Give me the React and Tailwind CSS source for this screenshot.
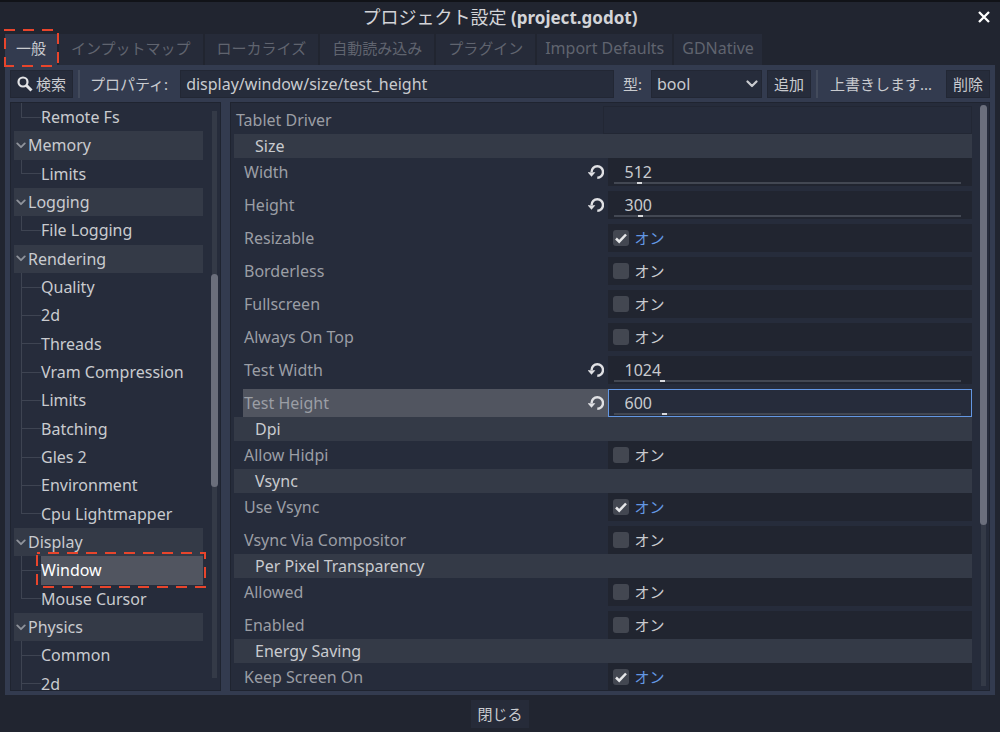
import React from "react";

const TABS = [
  { label: "一般" },
  { label: "インプットマップ" },
  { label: "ローカライズ" },
  { label: "自動読み込み" },
  { label: "プラグイン" },
  { label: "Import Defaults", latin: true },
  { label: "GDNative", latin: true },
];

const TREE = [
  { label: "Remote Fs", last: true },
  { label: "Memory", header: true },
  { label: "Limits", last: true },
  { label: "Logging", header: true },
  { label: "File Logging", last: true },
  { label: "Rendering", header: true },
  { label: "Quality" },
  { label: "2d" },
  { label: "Threads" },
  { label: "Vram Compression" },
  { label: "Limits" },
  { label: "Batching" },
  { label: "Gles 2" },
  { label: "Environment" },
  { label: "Cpu Lightmapper", last: true },
  { label: "Display", header: true },
  { label: "Window", selected: true },
  { label: "Mouse Cursor", last: true },
  { label: "Physics", header: true },
  { label: "Common" },
  { label: "2d" },
];

const GROUPS = [
  {
    title: "Size",
    rows: [
      { label: "Width", value: "512", pos: 6.8 },
      { label: "Height", value: "300", pos: 7.2 },
      { label: "Resizable", on: true },
      { label: "Borderless", on: false },
      { label: "Fullscreen", on: false },
      { label: "Always On Top", on: false },
      { label: "Test Width", value: "1024", pos: 13.6 },
      { label: "Test Height", value: "600", pos: 14.1, focused: true },
    ],
  },
  { title: "Dpi", rows: [{ label: "Allow Hidpi", on: false }] },
  { title: "Vsync", rows: [{ label: "Use Vsync", on: true }, { label: "Vsync Via Compositor", on: false }] },
  { title: "Per Pixel Transparency", rows: [{ label: "Allowed", on: false }, { label: "Enabled", on: false }] },
  { title: "Energy Saving", rows: [{ label: "Keep Screen On", on: true }] },
];

function Chevron({ className }) {
  return (
    <svg viewBox="0 0 12 8" fill="none" stroke="currentColor" strokeWidth="2.2" strokeLinecap="round" strokeLinejoin="round" className={className} aria-hidden="true">
      <path d="M1.5 1.5 6 6l4.500-4.500" />
    </svg>
  );
}

function TreeItem({ item }) {
  if (item.header) {
    return (
      <li className="min-h-0">
        <button className="flex h-full w-full items-center gap-[2px] bg-[#343a47] pl-[2px] text-left">
          <Chevron className="h-[7px] w-[10px] text-[#8f939b]" />
          <span>{item.label}</span>
        </button>
      </li>
    );
  }
  return (
    <li className="flex min-h-0 pl-[7px]">
      <div className="flex w-5 shrink-0 flex-col">
        <div className="flex-1 border-b border-l border-[#3e4452]" />
        <div className={item.last ? "flex-1" : "flex-1 border-l border-[#3e4452]"} />
      </div>
      <button className={item.selected ? "relative flex flex-1 items-center bg-[#515560] text-left text-white" : "flex flex-1 items-center text-left"}>
        {item.label}
        {item.selected && (
          <svg viewBox="0 0 170 36" fill="none" stroke="#e8452c" strokeWidth="2" className="absolute -left-[5px] -top-1 z-10 h-9 w-[170px]" aria-hidden="true">
            <path d="M1 1h168v34H1z" strokeDasharray="11 8" strokeDashoffset="8" />
          </svg>
        )}
      </button>
    </li>
  );
}

function Revert({ label }) {
  return (
    <button aria-label={`Revert ${label}`} className="mr-1 size-4 text-[#e0e1e4]">
      <svg viewBox="0 0 16 16" fill="none" stroke="currentColor" className="size-4">
        <path d="M3.600 8a5.700 5.700 0 1 1 5.700 5.700" strokeWidth="2.400" />
        <path d="M-.6 8.200h8L3.500 12.800z" fill="currentColor" stroke="none" />
      </svg>
    </button>
  );
}

function NumberField({ row }) {
  return (
    <div className={row.focused ? "flex h-7 flex-col border border-[#6397e3] bg-[#262c3b] pl-[5px] pr-[10px]" : "flex h-7 flex-col border border-transparent bg-[#212530] pl-[5px] pr-[10px]"}>
      <input type="text" aria-label={row.label} defaultValue={row.value} className="h-[23px] w-full bg-transparent pl-[11px] pt-[3px] leading-5 outline-none" />
      <input
        type="range"
        aria-label={`${row.label} slider`}
        min="0"
        max="100"
        step="any"
        defaultValue={row.pos}
        className="block h-[2px] w-full appearance-none bg-[#434853] outline-none [&::-webkit-slider-thumb]:h-[2px] [&::-webkit-slider-thumb]:w-[5px] [&::-webkit-slider-thumb]:appearance-none [&::-webkit-slider-thumb]:bg-[#d8d9dc]"
      />
    </div>
  );
}

function CheckField({ row }) {
  return (
    <label className="flex h-7 items-center gap-[6px] bg-[#212530] pl-[5px]">
      <span className="grid size-4">
        <input type="checkbox" aria-label={row.label} defaultChecked={row.on} className="peer size-4 appearance-none rounded-[3px] bg-[#434751] [grid-area:1/1]" />
        <svg viewBox="0 0 16 16" fill="none" stroke="#e6e7e9" strokeWidth="2.500" className="pointer-events-none invisible size-4 [grid-area:1/1] peer-checked:visible" aria-hidden="true">
          <path d="m3 8.500 3.200 3.200L13 4.500" />
        </svg>
      </span>
      <span className={row.on ? "text-[15px] text-[#6397e3]" : "text-[15px]"}>オン</span>
    </label>
  );
}

function PropertyRow({ row }) {
  return (
    <div className="grid grid-cols-2 pl-[9px]">
      <div className={row.focused ? "flex items-center bg-[#515560] pl-px" : "flex items-center pl-px"}>
        <span className="flex-1 text-[#9b9ea5]">{row.label}</span>
        {row.value && <Revert label={row.label} />}
      </div>
      {row.value ? <NumberField row={row} /> : <CheckField row={row} />}
    </div>
  );
}

const barButton = "flex h-7 items-center justify-center bg-[#262c3b] border border-[#222734]";

export default function App() {
  return (
    <div className="flex h-screen flex-col overflow-hidden border-t-2 border-[#111318] bg-[#212530] text-[16px] leading-5 text-[#c9cbcf] [font-family:'Noto_Sans','Noto_Sans_CJK_JP',sans-serif]">
      <header className="grid h-8 shrink-0 grid-cols-[32px_1fr_32px] items-center pb-[2px]">
        <h1 className="col-start-2 text-center text-[17px] font-bold text-[#d3d4d8]">
          <span className="text-[18px] font-normal">プロジェクト設定</span> (project.godot)
        </h1>
        <button aria-label="Close" className="flex justify-center text-white">
          <svg viewBox="0 0 12 12" fill="none" stroke="currentColor" strokeWidth="2.300" className="size-3">
            <path d="m1 1 10 10M11 1 1 11" />
          </svg>
        </button>
      </header>

      <nav className="flex h-[31px] shrink-0 gap-[2px] pl-[5px]">
        {TABS.map((tab, i) => (
          <button
            key={tab.label}
            className={
              i === 0
                ? "relative bg-[#333b4f] px-[11px] pb-1 text-[15px]"
                : tab.latin
                  ? "bg-[#262b39] px-2 pb-1 text-[#60646f]"
                  : "bg-[#262b39] px-3 pb-1 text-[15px] text-[#60646f]"
            }
          >
            {tab.label}
            {i === 0 && (
              <svg viewBox="0 0 56 40" fill="none" stroke="#e8452c" strokeWidth="2" className="absolute -left-px -top-[6px] h-10 w-14" aria-hidden="true">
                <path d="M0 2h11M19 2h11M38 2h11M54 5v11M54 24v11M48 38H37M29 38H18M10 38H1V29M1 21V10" />
              </svg>
            )}
          </button>
        ))}
      </nav>

      <main className="mx-[5px] flex min-h-0 flex-1 flex-col gap-1 bg-[#333b4f] px-[5px] pb-1 pt-[5px]">
        <div className="flex h-7 shrink-0 items-center">
          <button className={`${barButton} w-[63px] gap-[3px] text-[15px]`}>
            <svg viewBox="0 0 16 16" fill="none" stroke="#e3e4e6" className="size-4" aria-hidden="true">
              <circle cx="6" cy="6" r="4.500" strokeWidth="2.200" />
              <path d="m9.500 9.500 5 5" strokeWidth="3" />
            </svg>
            検索
          </button>
          <div className="ml-[5px] h-7 w-[2px] bg-[#434b5c]" />
          <label htmlFor="property" className="ml-[10px] mr-3 whitespace-nowrap text-[15px]">プロパティ:</label>
          <input id="property" type="text" defaultValue="display/window/size/test_height" className="h-7 min-w-0 flex-1 border border-[#222734] bg-[#262c3b] px-[5px] outline-none" />
          <label htmlFor="kind" className="mx-[9px] text-[15px]">型:</label>
          <div className="grid w-[111px] items-center">
            <select id="kind" className="h-7 w-full appearance-none border border-[#222734] bg-[#262c3b] pl-[5px] outline-none [grid-area:1/1]">
              <option>bool</option>
            </select>
            <Chevron className="pointer-events-none mr-1 h-2 w-3 justify-self-end [grid-area:1/1]" />
          </div>
          <button className={`${barButton} ml-[5px] w-11 text-[15px]`}>追加</button>
          <div className="ml-[5px] h-7 w-[2px] bg-[#434b5c]" />
          <button className="ml-3 mr-[14px] whitespace-nowrap text-[15px]">上書きします...</button>
          <button className={`${barButton} w-11 text-[15px]`}>削除</button>
        </div>

        <div className="flex min-h-0 flex-1 gap-[9px]">
          <section className="flex w-[211px] shrink-0 overflow-hidden border border-[#1f2430] bg-[#262c3b] pl-[3px] pr-[2px]">
            <ul className="grid h-[595px] flex-1 auto-rows-fr">
              {TREE.map((item, i) => (
                <TreeItem key={i} item={item} />
              ))}
            </ul>
            <div className="mb-3 ml-2 mt-2 flex w-[7px] flex-col items-center bg-[linear-gradient(#343a47,#343a47)] bg-[length:5px_100%] bg-center bg-no-repeat">
              <div className="mt-[163px] h-[213px] w-[7px] rounded-full bg-[#6b6f7c]" />
            </div>
          </section>

          <section className="flex min-w-0 flex-1 overflow-hidden border border-[#1f2430] bg-[#262c3b] pl-[3px] pr-[2px]">
            <div className="min-w-0 flex-1">
              <div className="mt-[3px] grid h-7 grid-cols-2 items-center">
                <label htmlFor="tablet" className="pl-[2px] text-[#9b9ea5]">Tablet Driver</label>
                <input id="tablet" type="text" className="h-7 w-full border border-[#222734] bg-transparent outline-none" />
              </div>
              {GROUPS.map((group) => (
                <section key={group.title}>
                  <h2 className="flex h-6 items-center bg-[#343a47] pl-[21px]">{group.title}</h2>
                  <div className="flex flex-col gap-[5px]">
                    {group.rows.map((row) => (
                      <PropertyRow key={row.label} row={row} />
                    ))}
                  </div>
                </section>
              ))}
            </div>
            <div className="mb-1 ml-2 mt-[2px] flex w-[7px] flex-col bg-[linear-gradient(#343a47,#343a47)] bg-[length:5px_100%] bg-center bg-no-repeat">
              <div className="h-[420px] w-[7px] rounded-full bg-[#6b6f7c]" />
            </div>
          </section>
        </div>
      </main>

      <footer className="flex h-[37px] shrink-0 items-center justify-center">
        <button className="h-7 bg-[#262b39] px-[6px] text-[15px]">閉じる</button>
      </footer>
    </div>
  );
}
